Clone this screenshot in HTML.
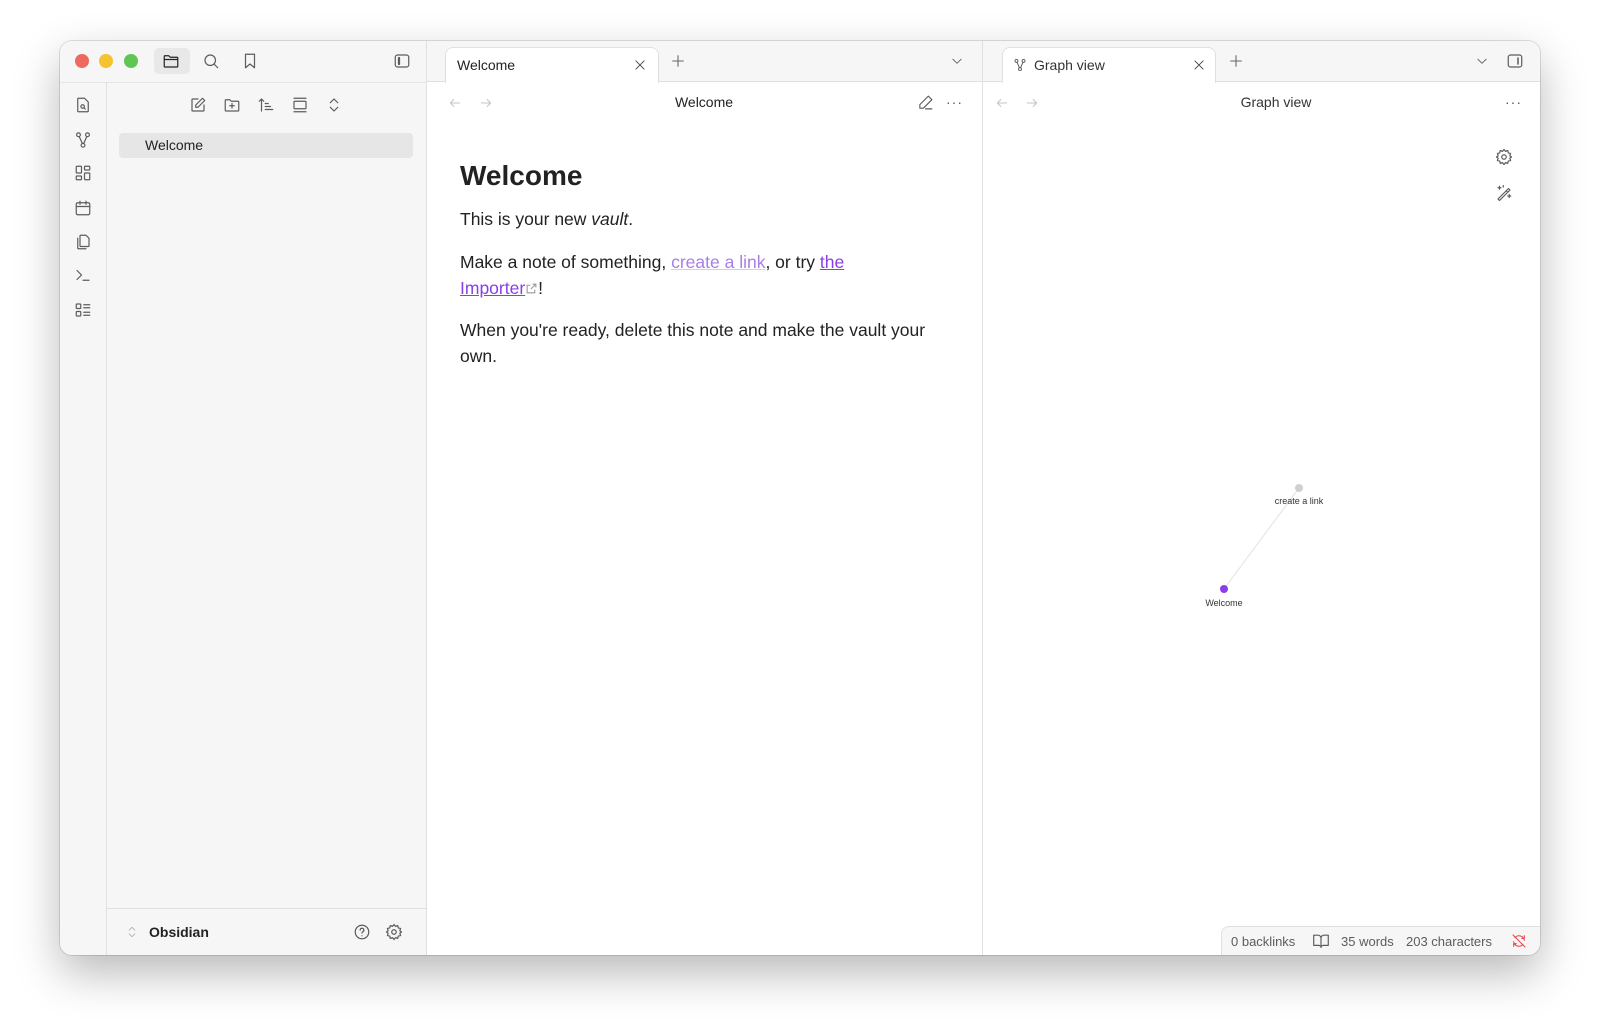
<!DOCTYPE html>
<html><head><meta charset="utf-8"><style>
*{box-sizing:border-box;margin:0;padding:0}
body{width:1600px;height:1034px;background:#fff;font-family:"Liberation Sans",sans-serif;position:relative;overflow:hidden;color:#222}
.win{position:absolute;left:60px;top:41px;width:1480px;height:914px;border-radius:12px;overflow:hidden;background:#fff;box-shadow:0 18px 45px rgba(0,0,0,.28),0 0 0 1px rgba(0,0,0,.12)}
.a{position:absolute}
svg.i{position:absolute;fill:none;stroke:#5c5c5c;stroke-width:1.6;stroke-linecap:round;stroke-linejoin:round}
.gray{background:#f6f6f6}
.tab{position:absolute;top:6px;height:36px;background:#fff;border:1px solid #e0e0e0;border-bottom:none;border-radius:8px 8px 0 0;font-size:14px;color:#222}
.p{position:absolute;left:400px;font-size:17.5px;line-height:26px;color:#222}
.st{position:absolute;top:7px;font-size:13px;color:#5c5c5c}
</style></head><body>
<div class="win">
  <div class="a gray" style="left:0;top:0;width:366px;height:914px"></div>
  <div class="a gray" style="left:366px;top:0;width:1114px;height:41px;border-bottom:1px solid #e0e0e0"></div>
  <div class="a" style="left:0;top:41px;width:366px;height:1px;background:#e6e6e6"></div>
  <div class="a" style="left:46px;top:41px;width:1px;height:873px;background:#e0e0e0"></div>
  <div class="a" style="left:366px;top:0;width:1px;height:914px;background:#e0e0e0"></div>
  <div class="a" style="left:922px;top:0;width:1px;height:914px;background:#e0e0e0"></div>
  <div class="a" style="left:15px;top:13px;width:14px;height:14px;border-radius:50%;background:#ee6a5e"></div>
  <div class="a" style="left:39px;top:13px;width:14px;height:14px;border-radius:50%;background:#f5c330"></div>
  <div class="a" style="left:64px;top:13px;width:14px;height:14px;border-radius:50%;background:#5fc553"></div>
  <div class="a" style="left:94px;top:7px;width:36px;height:26px;border-radius:5px;background:#e8e8e8"></div>
  <svg class="i" style="left:102px;top:11px;stroke:#222" width="18" height="18" viewBox="0 0 24 24"><path d="M3 6a1 1 0 0 1 1-1h5l2 2h9a1 1 0 0 1 1 1v11a1 1 0 0 1-1 1H4a1 1 0 0 1-1-1z M3 10h18"/></svg>
  <svg class="i" style="left:142px;top:11px" width="18" height="18" viewBox="0 0 24 24"><circle cx="11" cy="11" r="7"/><path d="M16 16l5 5"/></svg>
  <svg class="i" style="left:181px;top:11px" width="18" height="18" viewBox="0 0 24 24"><path d="M6 3h12v18l-6-5-6 5z"/></svg>
  <svg class="i" style="left:333px;top:11px" width="18" height="18" viewBox="0 0 24 24"><rect x="3" y="4" width="18" height="16" rx="3"/><path d="M8 8v8" stroke-width="3"/></svg>
  <svg class="i" style="left:14px;top:55px" width="18" height="18" viewBox="0 0 24 24"><path d="M6 3h8l5 5v12a1 1 0 0 1-1 1H6a1 1 0 0 1-1-1V4a1 1 0 0 1 1-1z"/><circle cx="11.5" cy="14" r="2.3"/><path d="M13.3 15.8l1.7 1.7"/></svg>
  <svg class="i" style="left:14px;top:90px" width="18" height="18" viewBox="0 0 24 24"><circle cx="6" cy="5" r="2.5"/><circle cx="18" cy="5" r="2.5"/><circle cx="12" cy="19" r="2.5"/><path d="M7 7.5l4 9M17 7.5l-4 9"/></svg>
  <svg class="i" style="left:14px;top:123px" width="18" height="18" viewBox="0 0 24 24"><rect x="3" y="3" width="7" height="9" rx="1"/><rect x="14" y="3" width="7" height="5" rx="1"/><rect x="14" y="12" width="7" height="9" rx="1"/><rect x="3" y="16" width="7" height="5" rx="1"/></svg>
  <svg class="i" style="left:14px;top:158px" width="18" height="18" viewBox="0 0 24 24"><rect x="3" y="5" width="18" height="16" rx="2"/><path d="M3 10h18M8 3v4M16 3v4"/></svg>
  <svg class="i" style="left:14px;top:192px" width="18" height="18" viewBox="0 0 24 24"><path d="M9 3h7l4 4v10a1 1 0 0 1-1 1H9a1 1 0 0 1-1-1V4a1 1 0 0 1 1-1zM5 7v13a1 1 0 0 0 1 1h10"/></svg>
  <svg class="i" style="left:14px;top:225px" width="18" height="18" viewBox="0 0 24 24"><path d="M4 6l6 6-6 6M12 19h8"/></svg>
  <svg class="i" style="left:14px;top:260px" width="18" height="18" viewBox="0 0 24 24"><rect x="3" y="4" width="6" height="6" rx="1"/><rect x="3" y="14" width="6" height="6" rx="1"/><path d="M13 5h8M13 9h8M13 15h8M13 19h8"/></svg>
  <svg class="i" style="left:129px;top:55px" width="18" height="18" viewBox="0 0 24 24"><path d="M12 4H5a1 1 0 0 0-1 1v14a1 1 0 0 0 1 1h14a1 1 0 0 0 1-1v-7"/><path d="M18 3l3 3-9 9H9v-3z"/></svg>
  <svg class="i" style="left:163px;top:55px" width="18" height="18" viewBox="0 0 24 24"><path d="M3 6a1 1 0 0 1 1-1h5l2 2h9a1 1 0 0 1 1 1v11a1 1 0 0 1-1 1H4a1 1 0 0 1-1-1zM12 10v6M9 13h6"/></svg>
  <svg class="i" style="left:197px;top:55px" width="18" height="18" viewBox="0 0 24 24"><path d="M6 20V4M3 7l3-3 3 3M11 10h4M11 14h7M11 18h10"/></svg>
  <svg class="i" style="left:231px;top:55px" width="18" height="18" viewBox="0 0 24 24"><path d="M4 3h16M4 21h16"/><rect x="4" y="7" width="16" height="10" rx="1"/></svg>
  <svg class="i" style="left:265px;top:55px" width="18" height="18" viewBox="0 0 24 24"><path d="M7 9l5-5 5 5M7 15l5 5 5-5"/></svg>
  <div class="a" style="left:59px;top:92px;width:294px;height:25px;background:#e6e6e6;border-radius:4px"></div>
  <div class="a" style="left:85px;top:96px;font-size:14px;color:#222">Welcome</div>
  <div class="a" style="left:46px;top:867px;width:320px;height:1px;background:#e0e0e0"></div>
  <svg class="i" style="left:65px;top:884px;stroke:#aaa;stroke-width:1.4" width="14" height="14" viewBox="0 0 24 24"><path d="M7 9l5-5 5 5M7 15l5 5 5-5"/></svg>
  <div class="a" style="left:89px;top:883px;font-size:14px;font-weight:bold;color:#222">Obsidian</div>
  <svg class="i" style="left:293px;top:882px" width="18" height="18" viewBox="0 0 24 24"><circle cx="12" cy="12" r="9"/><path d="M9.5 9.5a2.5 2.5 0 1 1 3.5 2.3c-.7.3-1 .9-1 1.7M12 17h.01"/></svg>
  <svg class="i" style="left:325px;top:882px" width="18" height="18" viewBox="0 0 24 24"><circle cx="12" cy="12" r="3"/><path d="M12 2l2 2.5 3-1 .7 3.1 3.1.7-1 3L22 12l-2.2 1.7 1 3-3.1.7-.7 3.1-3-1L12 22l-2-2.5-3 1-.7-3.1-3.1-.7 1-3L2 12l2.2-1.7-1-3 3.1-.7.7-3.1 3 1z"/></svg>
  <div class="tab" style="left:385px;width:214px"><span class="a" style="left:11px;top:9px">Welcome</span>
    <svg class="i" style="left:187px;top:10px;stroke:#444" width="14" height="14" viewBox="0 0 24 24"><path d="M5 5l14 14M19 5L5 19"/></svg></div>
  <svg class="i" style="left:610px;top:12px;stroke:#666" width="16" height="16" viewBox="0 0 24 24"><path d="M12 4v16M4 12h16"/></svg>
  <svg class="i" style="left:890px;top:13px;stroke:#666" width="14" height="14" viewBox="0 0 24 24"><path d="M5 9l7 7 7-7"/></svg>
  <svg class="i" style="left:388px;top:55px;stroke:#c4c4c4" width="14" height="14" viewBox="0 0 24 24"><path d="M20 12H4M10 6l-6 6 6 6"/></svg>
  <svg class="i" style="left:419px;top:55px;stroke:#c4c4c4" width="14" height="14" viewBox="0 0 24 24"><path d="M4 12h16M14 6l6 6-6 6"/></svg>
  <div class="a" style="left:600px;top:53px;width:88px;text-align:center;font-size:14px;color:#222">Welcome</div>
  <svg class="i" style="left:857px;top:53px" width="17" height="17" viewBox="0 0 24 24"><path d="M16 3l5 5L9 20H4v-5zM12 21h9"/></svg>
  <div class="a" style="left:886px;top:53px;font-size:14px;color:#555;letter-spacing:1px">···</div>
  <div class="a" style="left:400px;top:119px;font-size:28px;font-weight:bold;color:#222">Welcome</div>
  <div class="p" style="top:165px">This is your new <i>vault</i>.</div>
  <div class="p" style="top:208px;width:425px">Make a note of something, <span style="color:#a87ee8;text-decoration:underline;text-decoration-color:#dcc8f5">create a link</span>, or try <span style="color:#8a3ee8;text-decoration:underline">the Importer</span><svg style="display:inline-block;vertical-align:-1px" width="13" height="13" viewBox="0 0 24 24" fill="none" stroke="#999" stroke-width="2"><path d="M14 4h6v6M20 4l-9 9M18 14v6H4V6h6"/></svg>!</div>
  <div class="p" style="top:276px;width:480px">When you're ready, delete this note and make the vault your own.</div>
  <div class="tab" style="left:942px;width:214px"><svg class="i" style="left:10px;top:10px" width="14" height="14" viewBox="0 0 24 24"><circle cx="6" cy="5" r="2.5"/><circle cx="18" cy="5" r="2.5"/><circle cx="12" cy="19" r="2.5"/><path d="M7 7.5l4 9M17 7.5l-4 9"/></svg><span class="a" style="left:31px;top:9px;color:#333">Graph view</span>
    <svg class="i" style="left:189px;top:10px;stroke:#444" width="14" height="14" viewBox="0 0 24 24"><path d="M5 5l14 14M19 5L5 19"/></svg></div>
  <svg class="i" style="left:1168px;top:12px;stroke:#666" width="16" height="16" viewBox="0 0 24 24"><path d="M12 4v16M4 12h16"/></svg>
  <svg class="i" style="left:1415px;top:13px;stroke:#666" width="14" height="14" viewBox="0 0 24 24"><path d="M5 9l7 7 7-7"/></svg>
  <svg class="i" style="left:1446px;top:11px" width="18" height="18" viewBox="0 0 24 24"><rect x="3" y="4" width="18" height="16" rx="3"/><path d="M16 8v8" stroke-width="2"/></svg>
  <svg class="i" style="left:935px;top:55px;stroke:#c4c4c4" width="14" height="14" viewBox="0 0 24 24"><path d="M20 12H4M10 6l-6 6 6 6"/></svg>
  <svg class="i" style="left:965px;top:55px;stroke:#c4c4c4" width="14" height="14" viewBox="0 0 24 24"><path d="M4 12h16M14 6l6 6-6 6"/></svg>
  <div class="a" style="left:1156px;top:53px;width:120px;text-align:center;font-size:14px;color:#333">Graph view</div>
  <div class="a" style="left:1445px;top:53px;font-size:14px;color:#555;letter-spacing:1px">···</div>
  <svg class="i" style="left:1435px;top:107px" width="18" height="18" viewBox="0 0 24 24"><circle cx="12" cy="12" r="3"/><path d="M12 2l2 2.5 3-1 .7 3.1 3.1.7-1 3L22 12l-2.2 1.7 1 3-3.1.7-.7 3.1-3-1L12 22l-2-2.5-3 1-.7-3.1-3.1-.7 1-3L2 12l2.2-1.7-1-3 3.1-.7.7-3.1 3 1z"/></svg>
  <svg class="i" style="left:1435px;top:143px" width="18" height="18" viewBox="0 0 24 24"><path d="M4 20L18 6l2 2L6 22zM15 9l2 2M6 3v4M4 5h4M19 14v4M17 16h4M11 2v2"/></svg>
  <svg class="a" style="left:1100px;top:420px" width="300" height="200">
    <line x1="139" y1="27" x2="64" y2="128" stroke="#e2e2e2" stroke-width="1"/>
    <circle cx="139" cy="27" r="4" fill="#d0d0d0"/>
    <circle cx="64" cy="128" r="4" fill="#8a3ee8"/>
    <text x="139" y="43" font-size="9" fill="#333" text-anchor="middle" font-family="Liberation Sans">create a link</text>
    <text x="64" y="145" font-size="9" fill="#333" text-anchor="middle" font-family="Liberation Sans">Welcome</text>
  </svg>
  <div class="a" style="left:1161px;top:885px;width:330px;height:30px;background:#f6f6f6;border:1px solid #e0e0e0;border-radius:8px 0 0 0">
    <span class="st" style="left:9px">0 backlinks</span>
    <svg class="i" style="left:90px;top:6px" width="18" height="16" viewBox="0 0 24 22"><path d="M2 3h6a4 4 0 0 1 4 4v13a3 3 0 0 0-3-3H2zM22 3h-6a4 4 0 0 0-4 4v13a3 3 0 0 1 3-3h7z"/></svg>
    <span class="st" style="left:119px">35 words</span>
    <span class="st" style="left:184px">203 characters</span>
    <svg class="i" style="left:289px;top:6px;stroke:#e5484d" width="16" height="16" viewBox="0 0 24 24"><path d="M3 3l18 18M20 11a8 8 0 0 0-14-4M4 13a8 8 0 0 0 14 4M20 4v4h-4M4 20v-4h4"/></svg>
  </div>
</div>
</body></html>
